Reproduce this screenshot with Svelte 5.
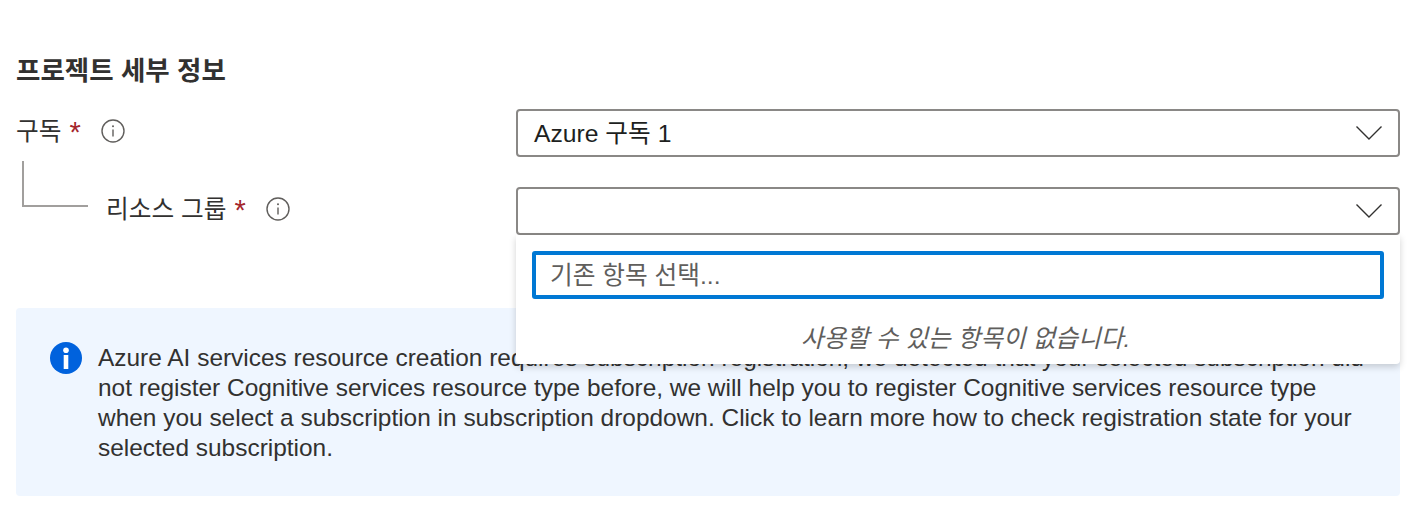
<script>
  const notice =
    'Azure AI services resource creation requires subscription registration, we detected that your selected subscription did not register Cognitive services resource type before, we will help you to register Cognitive services resource type when you select a subscription in subscription dropdown. Click to learn more how to check registration state for your selected subscription.';
</script>

<div class="page">
  <h2 class="title">프로젝트 세부 정보</h2>

  <div class="row first">
    <div class="label">
      <span>구독</span>
      <span class="req">*</span>
      <svg class="info" viewBox="0 0 24 24"><circle cx="12" cy="12" r="11" /><path d="M12 10.5v7" /><circle class="dot" cx="12" cy="7.3" r="1" /></svg>
    </div>
    <div class="select">
      <span class="value">Azure 구독 1</span>
      <svg class="chev" viewBox="0 0 28 16"><path d="M1.5 1.5 14 14 26.5 1.5" /></svg>
    </div>
  </div>

  <div class="row second">
    <div class="label nested">
      <i class="elbow"></i>
      <span>리소스 그룹</span>
      <span class="req">*</span>
      <svg class="info" viewBox="0 0 24 24"><circle cx="12" cy="12" r="11" /><path d="M12 10.5v7" /><circle class="dot" cx="12" cy="7.3" r="1" /></svg>
    </div>
    <div class="select-wrap">
      <div class="select">
        <span></span>
        <svg class="chev" viewBox="0 0 28 16"><path d="M1.5 1.5 14 14 26.5 1.5" /></svg>
      </div>
      <div class="menu">
        <input class="search" placeholder="기존 항목 선택..." />
        <p class="empty">사용할 수 있는 항목이 없습니다.</p>
      </div>
    </div>
  </div>

  <div class="notice">
    <svg class="notice-icon" viewBox="0 0 32 32">
      <circle cx="16" cy="16" r="16" fill="#0062dd" />
      <circle cx="16" cy="8.2" r="2.8" fill="#fff" />
      <rect x="13.7" y="13" width="4.6" height="14" fill="#fff" />
    </svg>
    <p>{notice}</p>
  </div>
</div>

<style>
  :global(body) {
    margin: 0;
    background: #fff;
  }

  .page {
    box-sizing: border-box;
    width: 1414px;
    height: 514px;
    padding: 55px 14px 0 16px;
    overflow: hidden;
    font-family: 'Liberation Sans', 'Noto Sans CJK KR', sans-serif;
    font-size: 24.7px;
    color: #323130;
  }

  .title {
    margin: 0;
    font-size: 26.5px;
    line-height: 32px;
    font-weight: 600;
    color: #323130;
  }

  .row {
    display: grid;
    grid-template-columns: 500px 884px;
  }

  .first {
    margin-top: 22px;
  }

  .second {
    margin-top: 30px;
  }

  .label {
    display: flex;
    align-items: flex-start;
    height: 48px;
    line-height: 46px;
    position: relative;
  }

  .nested {
    padding-left: 90px;
  }

  .elbow {
    position: absolute;
    left: 6px;
    top: -26px;
    width: 64px;
    height: 44px;
    border-left: 2px solid #a19f9d;
    border-bottom: 2px solid #a19f9d;
  }

  .req {
    margin-left: 8px;
    color: #a4262c;
    font-size: 29px;
    font-weight: 400;
  }

  .info {
    width: 24px;
    height: 24px;
    margin: 10px 0 0 20px;
    fill: none;
    stroke: #605e5c;
    stroke-width: 1.4;
  }

  .info .dot {
    fill: #605e5c;
    stroke: none;
  }

  .select-wrap {
    position: relative;
  }

  .select {
    box-sizing: border-box;
    height: 48px;
    display: flex;
    align-items: center;
    justify-content: space-between;
    padding: 0 15px 0 16px;
    border: 2px solid #8a8886;
    border-radius: 4px;
    background: #fff;
    color: #201f1e;
  }

  .value {
    position: relative;
    top: -2px;
  }

  .chev {
    width: 28px;
    height: 16px;
    fill: none;
    stroke: #323130;
    stroke-width: 1.4;
  }

  .menu {
    position: absolute;
    top: 48px;
    left: 0;
    right: 0;
    z-index: 2;
    box-sizing: border-box;
    height: 129px;
    padding: 16px 16px 0;
    background: #fff;
    border-radius: 0 0 4px 4px;
    box-shadow: 0 3px 7px rgba(0, 0, 0, 0.18);
  }

  .search {
    display: block;
    box-sizing: border-box;
    width: 100%;
    height: 48px;
    padding: 2px 14px 0 14px;
    border: 4px solid #0078d4;
    border-radius: 3px;
    outline: none;
    font: inherit;
    color: #201f1e;
  }

  .search::placeholder {
    color: #605e5c;
    opacity: 1;
  }

  .empty {
    margin: 22px 0 0;
    padding-left: 15px;
    text-align: center;
    font-size: 24.7px;
    line-height: 36px;
    font-style: italic;
    color: #605e5c;
  }

  .notice {
    display: flex;
    gap: 16px;
    box-sizing: border-box;
    height: 188px;
    margin-top: 73px;
    padding: 35px 30px 0 34px;
    background: #eff6ff;
    border-radius: 4px;
  }

  .notice-icon {
    flex: none;
    width: 32px;
    height: 32px;
    margin-top: -1px;
  }

  .notice p {
    margin: 0;
    font-size: 24.45px;
    line-height: 30px;
    color: #323130;
  }
</style>
